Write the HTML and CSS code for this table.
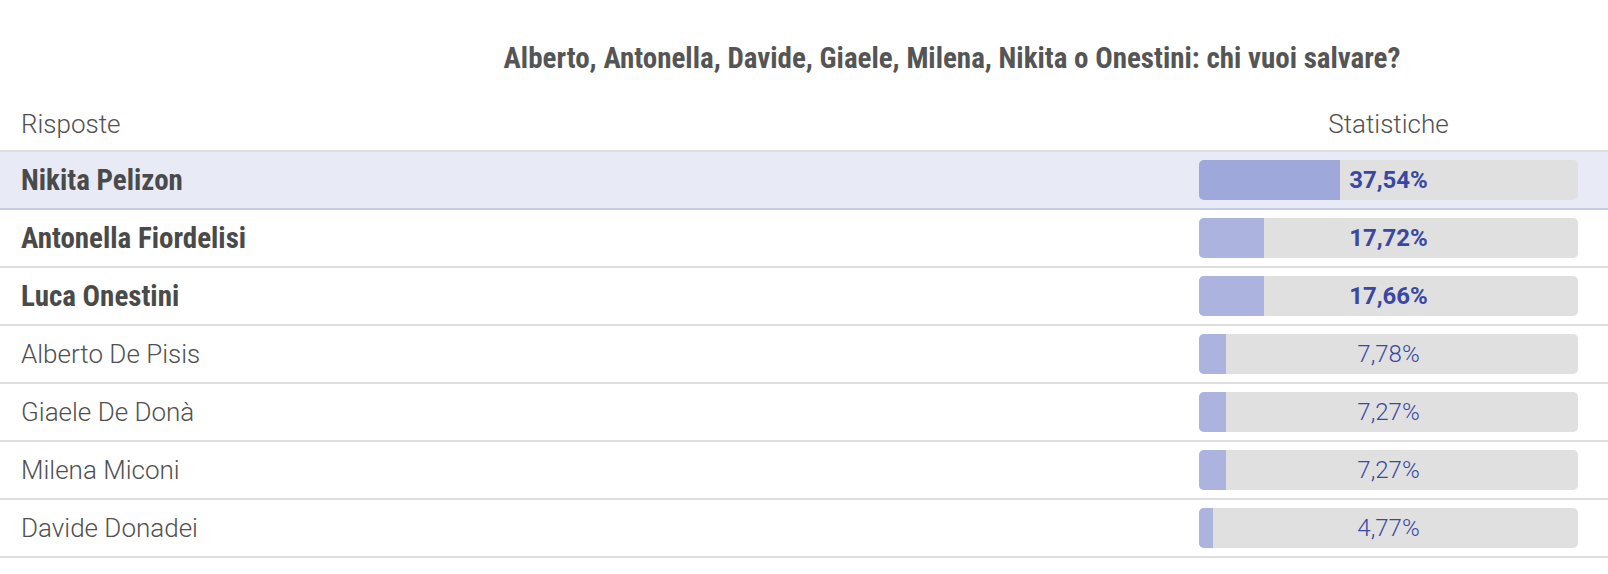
FILE: index.html
```html
<!DOCTYPE html>
<html lang="it">
<head>
<meta charset="utf-8">
<title>Sondaggio</title>
<link rel="stylesheet" href="styles.css">
</head>
<body>
<div class="poll">
  <h1 class="poll-title">Alberto, Antonella, Davide, Giaele, Milena, Nikita o Onestini: chi vuoi salvare?</h1>
  <div class="poll-table">
    <div class="row head">
      <div class="cell-name">Risposte</div>
      <div class="cell-stat">Statistiche</div>
    </div>
    <div class="row top strong">
      <div class="cell-name">Nikita Pelizon</div>
      <div class="cell-stat"><div class="bar"><div class="fill" style="width:37.2%"></div><span class="pct">37,54%</span></div></div>
    </div>
    <div class="row strong">
      <div class="cell-name">Antonella Fiordelisi</div>
      <div class="cell-stat"><div class="bar"><div class="fill" style="width:17.1%"></div><span class="pct">17,72%</span></div></div>
    </div>
    <div class="row strong">
      <div class="cell-name">Luca Onestini</div>
      <div class="cell-stat"><div class="bar"><div class="fill" style="width:17.1%"></div><span class="pct">17,66%</span></div></div>
    </div>
    <div class="row">
      <div class="cell-name">Alberto De Pisis</div>
      <div class="cell-stat"><div class="bar"><div class="fill" style="width:7.1%"></div><span class="pct">7,78%</span></div></div>
    </div>
    <div class="row">
      <div class="cell-name">Giaele De Donà</div>
      <div class="cell-stat"><div class="bar"><div class="fill" style="width:7.1%"></div><span class="pct">7,27%</span></div></div>
    </div>
    <div class="row">
      <div class="cell-name">Milena Miconi</div>
      <div class="cell-stat"><div class="bar"><div class="fill" style="width:7.1%"></div><span class="pct">7,27%</span></div></div>
    </div>
    <div class="row">
      <div class="cell-name">Davide Donadei</div>
      <div class="cell-stat"><div class="bar"><div class="fill" style="width:3.7%"></div><span class="pct">4,77%</span></div></div>
    </div>
  </div>
</div>
</body>
</html>
```

FILE: styles.css
```css
html, body {
  margin: 0;
  padding: 0;
  background: #ffffff;
}

body {
  font-family: Roboto, "Noto Sans", sans-serif;
  color: #505050;
}

.poll {
  width: 1608px;
}

.poll-title {
  margin: 0;
  padding: 42px 0 0 296px;
  text-align: center;
  font-family: "Roboto Condensed", Roboto, sans-serif;
  font-weight: 700;
  font-size: 29px;
  line-height: 32px;
  color: #555555;
}

.poll-table {
  margin-top: 36px;
  display: flex;
  flex-direction: column;
}

.row {
  display: grid;
  grid-template-columns: 1fr 438px;
  align-items: center;
  height: 56px;
  border-bottom: 2px solid #dedede;
}

.row.head {
  height: auto;
  align-items: end;
  padding-bottom: 12px;
}

.row.head .cell-name,
.row.head .cell-stat {
  font-weight: 300;
  font-size: 26px;
  line-height: 28px;
  color: #505050;
}

.row.head .cell-stat {
  text-align: center;
}

.cell-name {
  padding-left: 21px;
  font-size: 26px;
  line-height: 28px;
  font-weight: 300;
  color: #505050;
}

.row.strong .cell-name {
  font-family: "Roboto Condensed", Roboto, sans-serif;
  font-weight: 700;
  font-size: 29px;
  line-height: 32px;
  color: #4a4a4a;
}

.row.top {
  background: #e8eaf6;
  border-bottom-color: #c5cae9;
}

.cell-stat {
  padding: 0 30px 0 29px;
}

.bar {
  position: relative;
  height: 40px;
  border-radius: 5px;
  background: #e0e0e0;
  overflow: hidden;
}

.fill {
  height: 100%;
  background: #acb3de;
}

.row.top .fill {
  background: #9fa8da;
}

.pct {
  position: absolute;
  inset: 0;
  display: flex;
  align-items: center;
  justify-content: center;
  font-size: 24px;
  font-weight: 300;
  color: #3a47a3;
}

.row.strong .pct {
  font-size: 24px;
  font-weight: 700;
}
```
